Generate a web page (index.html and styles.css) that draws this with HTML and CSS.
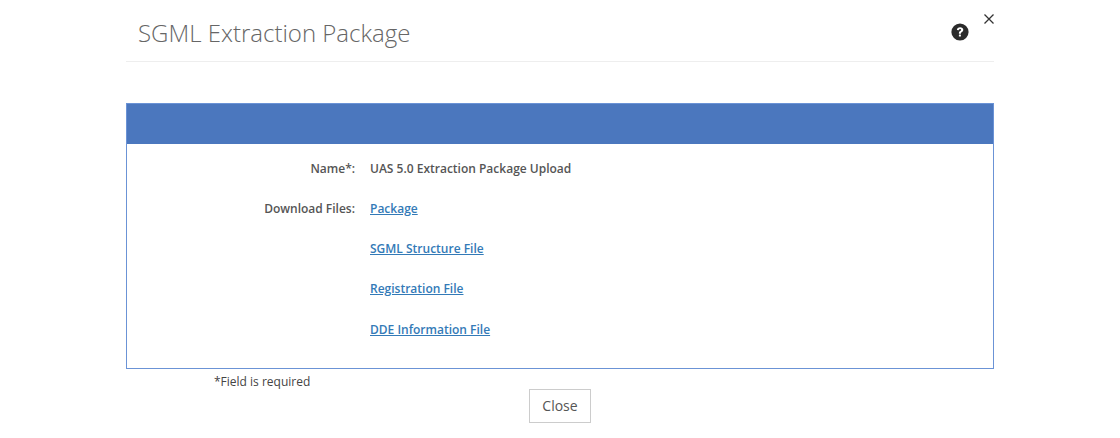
FILE: index.html
```html
<!DOCTYPE html>
<html lang="en">
<head>
  <meta charset="UTF-8" />
  <title>SGML Extraction Package</title>
  <link rel="stylesheet" href="styles.css">
</head>
<body>
  <div class="modal">
    <div class="modal-header">
      <h1>SGML Extraction Package</h1>
      <svg class="help" viewBox="0 0 18 18" width="18" height="18" aria-hidden="true">
        <circle cx="9" cy="9" r="8.6" fill="#2b2b2b"/>
        <path d="M5.9 7C6 5.2 7.3 4.2 9.1 4.2c1.8 0 3.2 1 3.2 2.6 0 1.2-.7 1.8-1.6 2.4-.6.4-.8.6-.8 1.2v.3H7.9v-.5c0-1 .4-1.6 1.2-2.1.7-.5 1-.7 1-1.2 0-.5-.4-.8-1-.8-.7 0-1.1.4-1.2 1.1z" fill="#fff"/>
        <rect x="7.9" y="11.6" width="2" height="2" rx=".3" fill="#fff"/>
      </svg>
    </div>
    <button class="dismiss" aria-label="Close">
      <svg viewBox="0 0 10 10" width="10" height="10" aria-hidden="true">
        <path d="M.5.5l9 9M9.5.5l-9 9" stroke="#333" stroke-width="1.3" fill="none"/>
      </svg>
    </button>

    <div class="panel">
      <div class="panel-heading"></div>
      <div class="panel-body">
        <div class="row"><label>Name*:</label><span>UAS 5.0 Extraction Package Upload</span></div>
        <div class="row"><label>Download Files:</label><a href="#">Package</a></div>
        <div class="row"><label></label><a href="#">SGML Structure File</a></div>
        <div class="row"><label></label><a href="#">Registration File</a></div>
        <div class="row"><label></label><a href="#">DDE Information File</a></div>
      </div>
    </div>

    <div class="required">*Field is required</div>
    <div class="actions"><button class="btn">Close</button></div>
  </div>
</body>
</html>
```

FILE: styles.css
```css
body {
  margin: 0;
  background: #fff;
  font-family: "Open Sans", Arial, sans-serif;
  color: #555;
}

.modal {
  position: relative;
  width: 868px;
  margin-left: 126px;
}

.modal-header {
  display: flex;
  align-items: center;
  justify-content: space-between;
  height: 61px;
  padding: 0 25px 0 12px;
  border-bottom: 1px solid #eee;
}

.modal-header h1 {
  margin: 4px 0 0;
  font-size: 24px;
  font-weight: 300;
  color: #666;
}

.help {
  margin-top: 2px;
}

.dismiss {
  display: flex;
  position: absolute;
  top: 14px;
  right: 0;
  padding: 0;
  border: none;
  background: none;
}

.panel {
  margin-top: 41px;
  height: 266px;
  box-sizing: border-box;
  border: 1px solid #6b93d6;
}

.panel-heading {
  height: 40px;
  background: #4b77be;
}

.panel-body {
  padding-top: 4px;
}

.row {
  display: flex;
  align-items: center;
  height: 40px;
  font-size: 12px;
  font-weight: 550;
}

.row:last-child {
  margin-top: 1px;
}

.row label {
  width: 228px;
  margin-right: 15px;
  text-align: right;
}

.row a {
  color: #337ab7;
}

.required {
  margin: 5px 0 0 88px;
  font-size: 12px;
  line-height: 16px;
  color: #444;
}

.actions {
  display: flex;
  justify-content: center;
  margin-top: -1px;
}

.btn {
  width: 62px;
  height: 34px;
  padding: 0 0 2px;
  border: 1px solid #ccc;
  background: #fff;
  color: #555;
  font-family: inherit;
  font-size: 14px;
}
```
